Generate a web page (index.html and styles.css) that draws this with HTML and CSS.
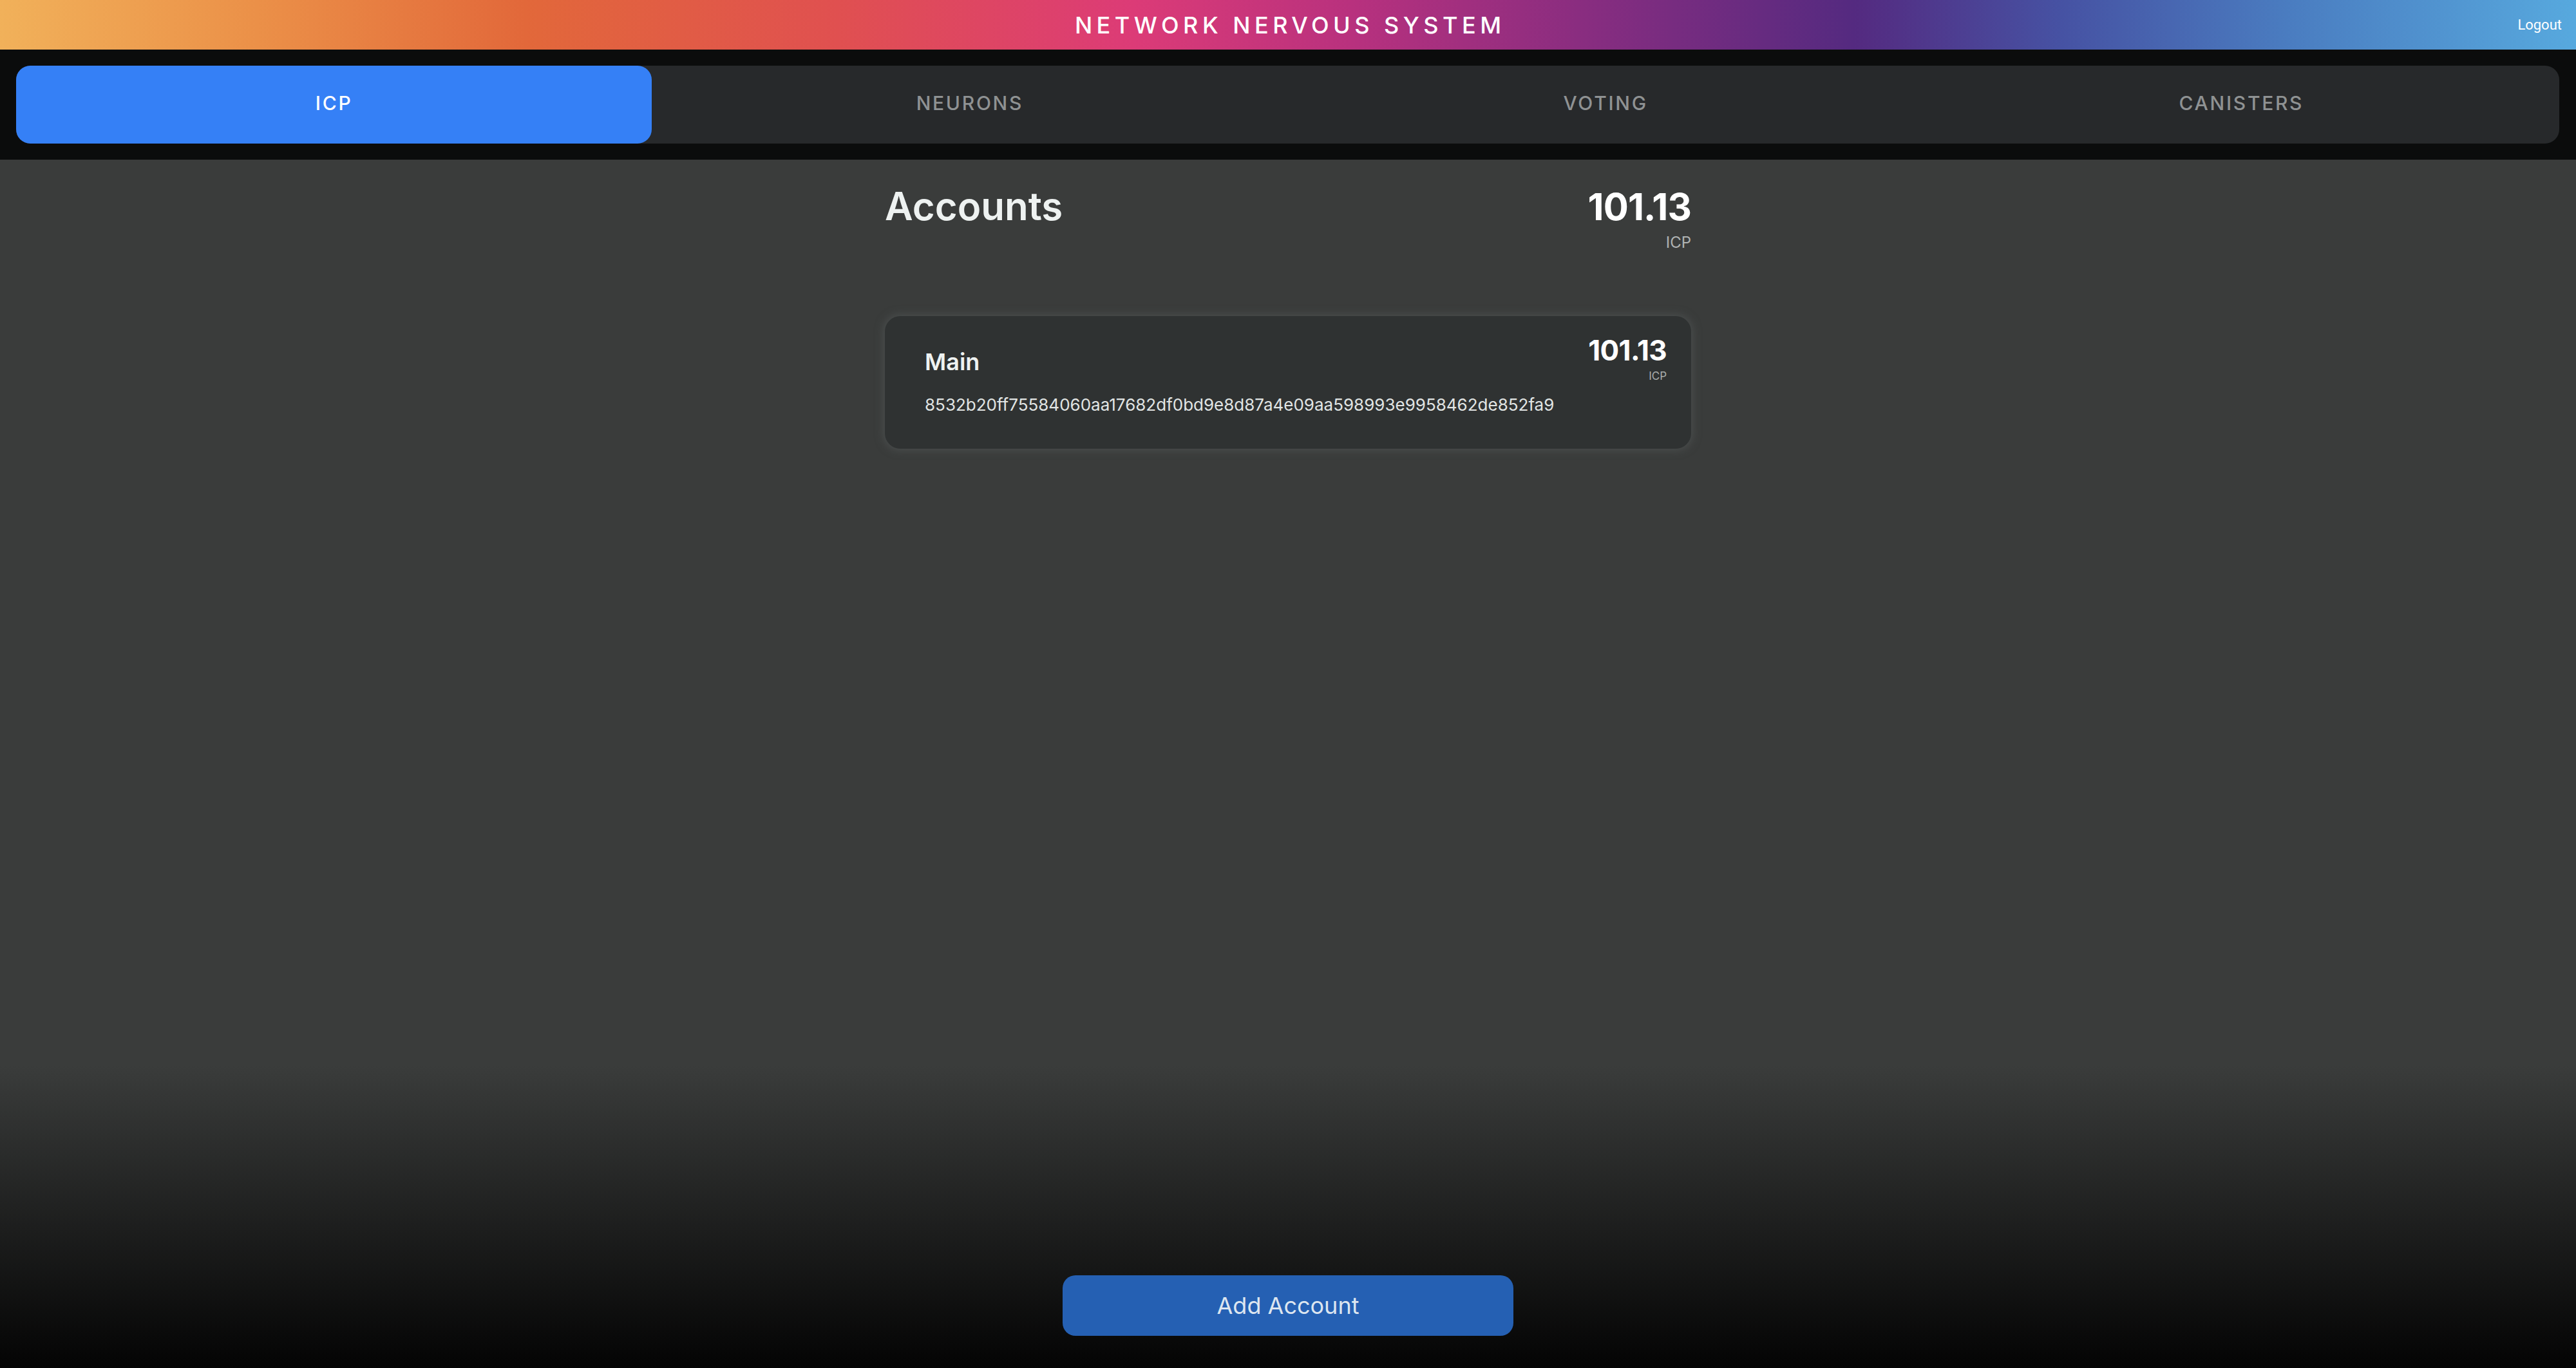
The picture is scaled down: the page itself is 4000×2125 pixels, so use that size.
FILE: index.html
```html
<!DOCTYPE html>
<html lang="en">
<head>
<meta charset="utf-8">
<title>Network Nervous System</title>
<link rel="stylesheet" href="styles.css">
</head>
<body>
  <header class="topbar">
    <h1 class="brand">NETWORK NERVOUS SYSTEM</h1>
    <button class="logout">Logout</button>
  </header>
  <nav class="nav">
    <div class="tabs">
      <a class="tab active">ICP</a>
      <a class="tab">NEURONS</a>
      <a class="tab">VOTING</a>
      <a class="tab">CANISTERS</a>
    </div>
  </nav>
  <main class="page">
    <section class="content">
      <div class="summary">
        <h2 class="title">Accounts</h2>
        <div class="total">
          <div class="total-value">101.13</div>
          <div class="total-unit">ICP</div>
        </div>
      </div>
      <article class="card">
        <div class="card-head">
          <h3 class="card-name">Main</h3>
          <div class="card-amount">
            <div class="card-value">101.13</div>
            <div class="card-unit">ICP</div>
          </div>
        </div>
        <p class="card-id">8532b20ff75584060aa17682df0bd9e8d87a4e09aa598993e9958462de852fa9</p>
      </article>
    </section>
    <footer class="footer">
      <button class="add-btn">Add Account</button>
    </footer>
  </main>
</body>
</html>
```
FILE: styles.css
```css
* { box-sizing: border-box; }

html, body {
  margin: 0;
  padding: 0;
}

body {
  min-height: 100vh;
  display: flex;
  flex-direction: column;
  background: #0b0c0c;
  font-family: "Inter", "Noto Sans", sans-serif;
  color: #ffffff;
}

.topbar {
  height: 77px;
  display: flex;
  align-items: center;
  justify-content: center;
  position: relative;
  background: linear-gradient(90deg,
    #f1b15a 0px,
    #eb9048 400px,
    #e2683a 816px,
    #e05050 1300px,
    #dc3b77 1760px,
    #b8317e 2100px,
    #8a2d80 2450px,
    #542a80 2880px,
    #4652a3 3200px,
    #4a7cc0 3550px,
    #57a9de 4000px);
}

.brand {
  margin: 0;
  font-size: 36px;
  font-weight: 500;
  letter-spacing: 0.18em;
  margin-right: -0.18em;
  color: #ffffff;
  line-height: 1;
}

.logout {
  position: absolute;
  right: 22px;
  top: 26px;
  background: none;
  border: none;
  padding: 0;
  color: #ffffff;
  font-family: "Roboto", sans-serif;
  font-size: 22px;
  line-height: 26px;
  cursor: pointer;
}

.nav {
  padding: 25px 26px 25px 25px;
  background: #0b0c0c;
}

.tabs {
  display: grid;
  grid-template-columns: repeat(4, 1fr);
  height: 121px;
  background: #27292b;
  border-radius: 22px;
}

.tab {
  display: flex;
  align-items: center;
  justify-content: center;
  padding-bottom: 6px;
  font-size: 30px;
  font-weight: 500;
  letter-spacing: 0.09em;
  color: #8f9293;
  border-radius: 22px;
  cursor: pointer;
}

.tab.active {
  background: #3580f6;
  color: #ffffff;
}

.page {
  flex: 1;
  display: flex;
  flex-direction: column;
  background: linear-gradient(to bottom, #3a3c3b 0, #3a3c3b calc(100% - 470px), #040404 100%);
}

.content {
  width: 1252px;
  margin: 0 auto;
  padding-top: 36px;
}

.summary {
  display: flex;
  justify-content: space-between;
  align-items: baseline;
}

.title {
  margin: 0;
  font-size: 60px;
  font-weight: 600;
  line-height: 1.2;
  color: #eef2f1;
}

.total {
  display: flex;
  flex-direction: column;
  align-items: flex-end;
}

.total-value {
  font-size: 58px;
  font-weight: 700;
  line-height: 1.2;
  letter-spacing: -0.015em;
}

.total-unit {
  margin-top: 6px;
  font-size: 24px;
  line-height: 1.2;
  color: #b0b3b3;
}

.card {
  margin-top: 100px;
  padding: 31px 38px 52px 62px;
  background: #2f3232;
  border-radius: 24px;
  box-shadow: 0 0 14px 2px rgba(90, 94, 94, 0.55);
}

.card-head {
  display: flex;
  justify-content: space-between;
  align-items: center;
}

.card-name {
  margin: 0;
  padding-top: 10px;
  font-size: 36px;
  font-weight: 600;
  line-height: 1.2;
  color: #eef2f1;
}

.card-amount {
  display: flex;
  flex-direction: column;
  align-items: flex-end;
}

.card-value {
  font-size: 44px;
  font-weight: 700;
  line-height: 1;
  letter-spacing: -0.015em;
}

.card-unit {
  margin-top: 10px;
  font-size: 17px;
  line-height: 1;
  color: #a9adad;
}

.card-id {
  margin: 20px 0 0;
  font-size: 26px;
  line-height: 1.2;
  color: #e1e5e4;
}

.footer {
  margin-top: auto;
  display: flex;
  justify-content: center;
  padding-bottom: 50px;
}

.add-btn {
  width: 700px;
  height: 94px;
  border: none;
  border-radius: 20px;
  background: #2560b3;
  color: #dde6f0;
  font-family: "Inter", "Noto Sans", sans-serif;
  font-size: 36px;
  font-weight: 400;
  cursor: pointer;
}
```
